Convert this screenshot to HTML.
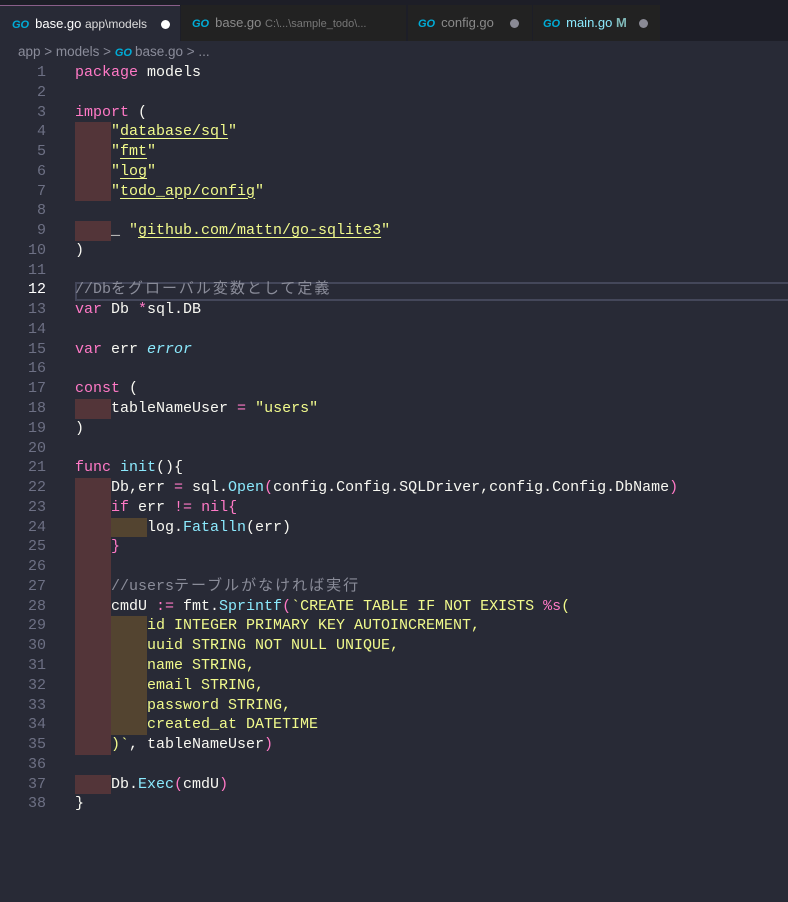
<!DOCTYPE html>
<html><head><meta charset="utf-8"><style>
body{margin:0;width:788px;height:902px;background:#282a36;overflow:hidden;font-family:"Liberation Sans","Noto Sans CJK JP",sans-serif}
.tabs{position:absolute;left:0;top:0;width:788px;height:41px;background:#1d1e27}
.tab{position:absolute;top:5px;height:36px;background:#222222;color:#8a8a8a;font-size:13px;line-height:36px;white-space:nowrap}
.go{color:#00acd7;font-weight:bold;font-style:italic;font-size:11px;margin-right:6px}
.dot{display:inline-block;width:9px;height:9px;border-radius:50%;background:#8a8a95;vertical-align:middle}
.bc{position:absolute;left:18px;top:44px;font-size:13.5px;color:#8a8c9a}
.code{position:absolute;left:0;top:63px;width:788px;font-family:"Liberation Mono","Noto Sans CJK JP",monospace;font-size:15px;color:#f8f8f2}
.l{position:relative;height:19.78px;line-height:19.78px;white-space:pre}
.n{position:absolute;left:0;width:46px;text-align:right;color:#6d7084}
.x{position:absolute;left:75px}
.k{color:#ff79c6}.s{color:#f1fa8c}.u{text-decoration:underline;text-decoration-color:#f1fa8c;text-underline-offset:3px}.f{color:#8be9fd}.t{color:#8be9fd;font-style:italic}.c{color:#8a8c99}
.r,.o{display:inline-block;width:36px;height:19.78px;vertical-align:top;background:#533539}
.o{background:#534430}
.cur{position:absolute;left:75px;right:0;top:219px;height:15px;border-top:2px solid #44475a;border-bottom:2px solid #44475a;border-left:2px solid #44475a}
</style></head><body>
<div class="tabs">
 <div class="tab" style="left:0;width:180px;background:#282a36;color:#fff;top:5px;border-top:1px solid #8a5f8a"><span style="margin-left:12px" class="go">GO</span>base.go <span style="font-size:12px;color:#ddd">app\models</span><span class="dot" style="background:#fff;margin-left:14px"></span></div>
 <div class="tab" style="left:181px;width:225px"><span style="margin-left:11px" class="go">GO</span>base.go <span style="font-size:11px;color:#777">C:\...\sample_todo\...</span></div>
 <div class="tab" style="left:408px;width:124px"><span style="margin-left:10px" class="go">GO</span>config.go<span class="dot" style="margin-left:16px"></span></div>
 <div class="tab" style="left:533px;width:127px;color:#8be9fd"><span style="margin-left:10px" class="go">GO</span>main.go <b style="color:#7fb8b8">M</b><span class="dot" style="margin-left:12px"></span></div>
</div>
<div class="bc">app &gt; models &gt; <span class="go" style="margin-right:3px">GO</span>base.go &gt; ...</div>
<div class="code">
<div class="cur"></div>
<div class="l"><span class="n">1</span><span class="x"><span class="k">package</span> models</span></div>
<div class="l"><span class="n">2</span></div>
<div class="l"><span class="n">3</span><span class="x"><span class="k">import</span> (</span></div>
<div class="l"><span class="n">4</span><span class="x"><span class="r"></span><span class="s">"<span class="u">database/sql</span>"</span></span></div>
<div class="l"><span class="n">5</span><span class="x"><span class="r"></span><span class="s">"<span class="u">fmt</span>"</span></span></div>
<div class="l"><span class="n">6</span><span class="x"><span class="r"></span><span class="s">"<span class="u">log</span>"</span></span></div>
<div class="l"><span class="n">7</span><span class="x"><span class="r"></span><span class="s">"<span class="u">todo_app/config</span>"</span></span></div>
<div class="l"><span class="n">8</span></div>
<div class="l"><span class="n">9</span><span class="x"><span class="r"></span>_ <span class="s">"<span class="u">github.com/mattn/go-sqlite3</span>"</span></span></div>
<div class="l"><span class="n">10</span><span class="x">)</span></div>
<div class="l"><span class="n">11</span></div>
<div class="l"><span class="n" style="color:#fff">12</span><span class="x c">//Db<span style="letter-spacing:2px">をグローバル変数として定義</span></span></div>
<div class="l"><span class="n">13</span><span class="x"><span class="k">var</span> Db <span class="k">*</span>sql.DB</span></div>
<div class="l"><span class="n">14</span></div>
<div class="l"><span class="n">15</span><span class="x"><span class="k">var</span> err <span class="t">error</span></span></div>
<div class="l"><span class="n">16</span></div>
<div class="l"><span class="n">17</span><span class="x"><span class="k">const</span> (</span></div>
<div class="l"><span class="n">18</span><span class="x"><span class="r"></span>tableNameUser <span class="k">=</span> <span class="s">"users"</span></span></div>
<div class="l"><span class="n">19</span><span class="x">)</span></div>
<div class="l"><span class="n">20</span></div>
<div class="l"><span class="n">21</span><span class="x"><span class="k">func</span> <span class="f">init</span>(){</span></div>
<div class="l"><span class="n">22</span><span class="x"><span class="r"></span>Db,err <span class="k">=</span> sql.<span class="f">Open</span><span class="k">(</span>config.Config.SQLDriver,config.Config.DbName<span class="k">)</span></span></div>
<div class="l"><span class="n">23</span><span class="x"><span class="r"></span><span class="k">if</span> err <span class="k">!=</span> <span class="k">nil{</span></span></div>
<div class="l"><span class="n">24</span><span class="x"><span class="r"></span><span class="o"></span>log.<span class="f">Fatalln</span>(err)</span></div>
<div class="l"><span class="n">25</span><span class="x"><span class="r"></span><span class="k">}</span></span></div>
<div class="l"><span class="n">26</span><span class="x"><span class="r"></span></span></div>
<div class="l"><span class="n">27</span><span class="x"><span class="r"></span><span class="c">//users<span style="letter-spacing:2px">テーブルがなければ実行</span></span></span></div>
<div class="l"><span class="n">28</span><span class="x"><span class="r"></span>cmdU <span class="k">:=</span> fmt.<span class="f">Sprintf</span><span class="k">(</span><span class="s">`CREATE TABLE IF NOT EXISTS </span><span class="k">%s</span><span class="s">(</span></span></div>
<div class="l"><span class="n">29</span><span class="x"><span class="r"></span><span class="o"></span><span class="s">id INTEGER PRIMARY KEY AUTOINCREMENT,</span></span></div>
<div class="l"><span class="n">30</span><span class="x"><span class="r"></span><span class="o"></span><span class="s">uuid STRING NOT NULL UNIQUE,</span></span></div>
<div class="l"><span class="n">31</span><span class="x"><span class="r"></span><span class="o"></span><span class="s">name STRING,</span></span></div>
<div class="l"><span class="n">32</span><span class="x"><span class="r"></span><span class="o"></span><span class="s">email STRING,</span></span></div>
<div class="l"><span class="n">33</span><span class="x"><span class="r"></span><span class="o"></span><span class="s">password STRING,</span></span></div>
<div class="l"><span class="n">34</span><span class="x"><span class="r"></span><span class="o"></span><span class="s">created_at DATETIME</span></span></div>
<div class="l"><span class="n">35</span><span class="x"><span class="r"></span><span class="s">)`</span>, tableNameUser<span class="k">)</span></span></div>
<div class="l"><span class="n">36</span></div>
<div class="l"><span class="n">37</span><span class="x"><span class="r"></span>Db.<span class="f">Exec</span><span class="k">(</span>cmdU<span class="k">)</span></span></div>
<div class="l"><span class="n">38</span><span class="x">}</span></div>
</div>
</body></html>
